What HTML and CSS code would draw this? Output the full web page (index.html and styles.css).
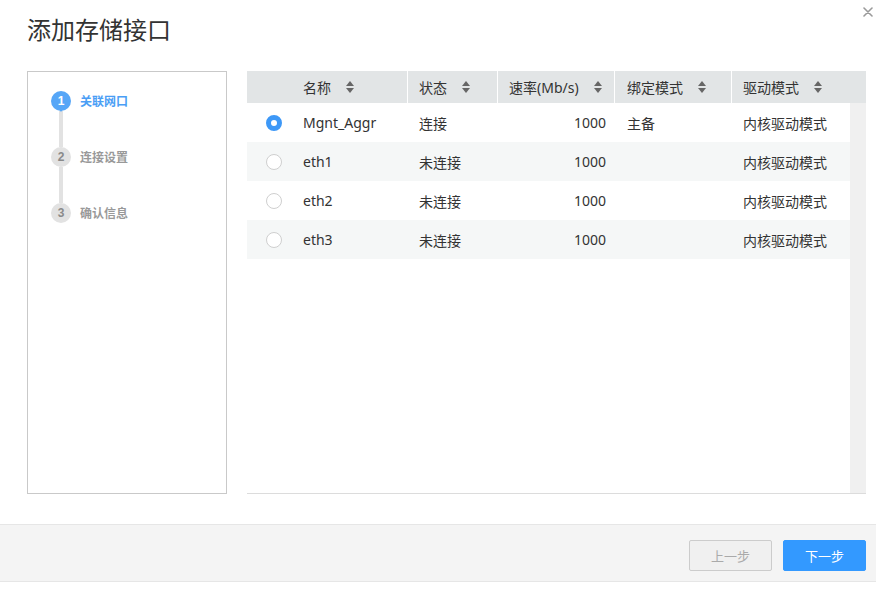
FILE: index.html
```html
<!DOCTYPE html>
<html lang="zh">
<head>
<meta charset="utf-8">
<link rel="stylesheet" href="styles.css">
</head>
<body>
<div class="dialog">
  <div class="head">
    <h1 class="title">添加存储接口</h1>
    <button class="close" aria-label="close">
      <svg width="10" height="10" viewBox="0 0 10 10"><path d="M1 1L9 9M9 1L1 9" stroke="#9a9a9a" stroke-width="1.6" stroke-linecap="round"/></svg>
    </button>
  </div>
  <div class="main">
    <div class="steps">
      <div class="step active"><span class="dot">1</span><span class="label">关联网口</span></div>
      <div class="conn"></div>
      <div class="step"><span class="dot">2</span><span class="label">连接设置</span></div>
      <div class="conn"></div>
      <div class="step"><span class="dot">3</span><span class="label">确认信息</span></div>
    </div>
    <div class="table">
      <div class="thead">
        <div class="c c0"></div>
        <div class="c c1">名称<i class="sort"></i></div>
        <div class="c c2">状态<i class="sort"></i></div>
        <div class="c c3">速率(Mb/s)<i class="sort"></i></div>
        <div class="c c4">绑定模式<i class="sort"></i></div>
        <div class="c c5 last">驱动模式<i class="sort"></i></div>
      </div>
      <div class="tbody">
        <div class="rows">
          <div class="row">
            <div class="c c0"><span class="radio on"></span></div>
            <div class="c c1">Mgnt_Aggr</div>
            <div class="c c2">连接</div>
            <div class="c c3 num">1000</div>
            <div class="c c4">主备</div>
            <div class="c c5b">内核驱动模式</div>
          </div>
          <div class="row alt">
            <div class="c c0"><span class="radio"></span></div>
            <div class="c c1">eth1</div>
            <div class="c c2">未连接</div>
            <div class="c c3 num">1000</div>
            <div class="c c4"></div>
            <div class="c c5b">内核驱动模式</div>
          </div>
          <div class="row">
            <div class="c c0"><span class="radio"></span></div>
            <div class="c c1">eth2</div>
            <div class="c c2">未连接</div>
            <div class="c c3 num">1000</div>
            <div class="c c4"></div>
            <div class="c c5b">内核驱动模式</div>
          </div>
          <div class="row alt">
            <div class="c c0"><span class="radio"></span></div>
            <div class="c c1">eth3</div>
            <div class="c c2">未连接</div>
            <div class="c c3 num">1000</div>
            <div class="c c4"></div>
            <div class="c c5b">内核驱动模式</div>
          </div>
        </div>
        <div class="track"></div>
      </div>
    </div>
  </div>
  <div class="foot">
    <button class="btn prev">上一步</button>
    <button class="btn next">下一步</button>
  </div>
</div>
</body>
</html>
```
FILE: styles.css
```css
* { box-sizing: border-box; }
html, body { margin: 0; padding: 0; background: #fff; }
body {
  width: 876px; height: 591px; overflow: hidden;
  font-family: "Noto Sans", "Noto Sans CJK SC", sans-serif;
  color: #333;
}
.dialog { display: flex; flex-direction: column; height: 591px; }
.head { display: flex; justify-content: space-between; align-items: flex-start; height: 71px; padding: 0 0 0 27px; }
.title { margin: 13px 0 0; font-size: 24px; font-weight: normal; line-height: 34px; color: #333; }
.close { border: 0; background: none; padding: 0; margin: 7px 3px 0 0; width: 10px; height: 10px; display: flex; }
.main { display: flex; gap: 20px; padding: 0 10px 0 27px; height: 423px; }
.steps { width: 200px; border: 1px solid #c9c9c9; padding: 19px 0 0 23px; display: flex; flex-direction: column; }
.step { display: flex; align-items: center; gap: 9px; height: 20px; }
.dot {
  position: relative; width: 20px; height: 20px; border-radius: 50%;
  background: #e2e2e2; color: #8a8a8a; font-size: 12px; font-weight: bold;
  display: flex; align-items: center; justify-content: center;
  font-family: "Liberation Sans", sans-serif;
}
.label { font-size: 12px; font-weight: bold; color: #999; }
.step.active .dot { background: #56a6f7; color: #fff; }
.step.active .dot::after {
  content: ""; position: absolute; left: 6px; top: 15px;
  border-left: 4px solid transparent; border-right: 4px solid transparent;
  border-top: 6px solid #56a6f7;
}
.step.active .label { color: #4a9ef5; }
.conn { width: 4px; height: 36px; background: #e2e2e2; margin-left: 8px; }
.table { flex: 1; display: flex; flex-direction: column; border-bottom: 1px solid #dcdcdc; }
.thead { display: flex; height: 32px; background: #e2e5e6; font-size: 14px; }
.thead .c { border-right: 1px solid #fff; }
.thead .c0, .thead .c.last { border-right: 0; }
.c { display: flex; align-items: center; padding-left: 12px; white-space: nowrap; }
.c0 { width: 43px; padding-left: 19px; }
.c1 { width: 118px; padding-left: 13px; }
.c2 { width: 90px; padding-left: 11px; }
.c3 { width: 117px; padding-left: 11px; }
.c4 { width: 117px; padding-left: 12px; }
.c5 { flex: 1; padding-left: 11px; }
.c5b { flex: 1; padding-left: 11px; display: flex; align-items: center; }
.c3.num { justify-content: flex-end; padding-right: 9px; }
.sort { display: inline-flex; flex-direction: column; gap: 2px; margin-left: 15px; }
.sort::before, .sort::after { content: ""; width: 0; height: 0; border-left: 4.5px solid transparent; border-right: 4.5px solid transparent; }
.sort::before { border-bottom: 5px solid #666; }
.sort::after { border-top: 5px solid #666; }
.tbody { flex: 1; display: flex; }
.rows { flex: 1; display: flex; flex-direction: column; }
.track { width: 16px; background: #f0f0f0; }
.row { display: flex; height: 39px; font-size: 14px; }
.row.alt { background: #f5f7f7; }
.radio { width: 16px; height: 16px; border-radius: 50%; border: 1px solid #cfcfcf; background: #fff; }
.radio.on { border: 5.5px solid #3d98f7; }
.foot {
  margin-top: 30px; height: 58px; background: #f4f4f4;
  border-top: 1px solid #e6e6e6; border-bottom: 1px solid #e6e6e6;
  display: flex; justify-content: flex-end; align-items: flex-start; gap: 11px;
  padding: 15px 10px 0 0;
}
.btn { width: 83px; height: 31px; border-radius: 2px; font-size: 13px; font-family: "Noto Sans CJK SC", sans-serif; padding: 0; }
.prev { background: #f0f0f0; border: 1px solid #cccccc; color: #aaa; }
.next { background: #3399ff; border: 1px solid #3399ff; color: #fff; }
```
